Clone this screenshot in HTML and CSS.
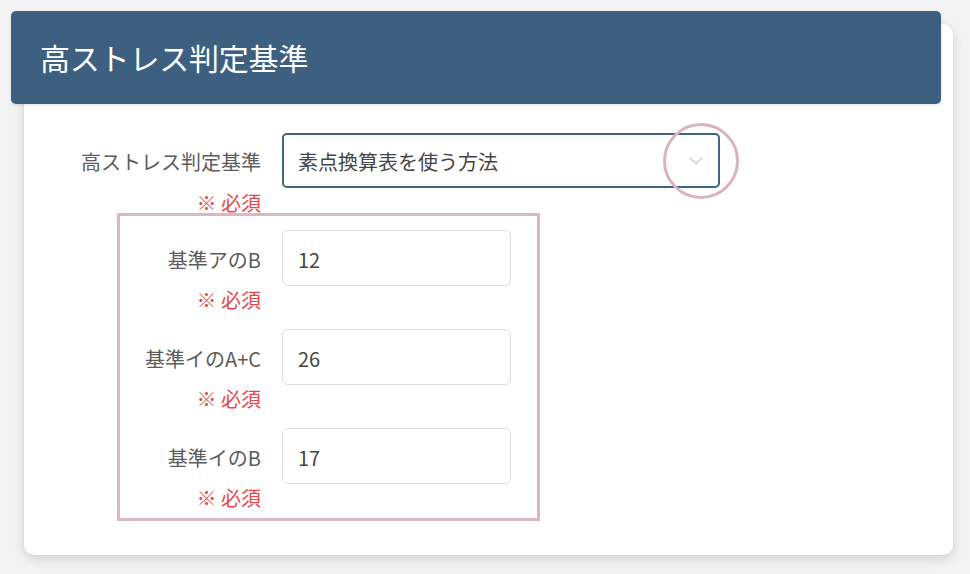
FILE: index.html
```html
<!DOCTYPE html>
<html lang="ja">
<head>
<meta charset="utf-8">
<link rel="stylesheet" href="styles.css">
</head>
<body>
<div class="card">
  <div class="header"><h1 class="title">高ストレス判定基準</h1></div>
  <div class="form">
    <div class="row row-main">
      <div class="label-col">
        <div class="label">高ストレス判定基準</div>
      </div>
      <div class="control">
        <div class="select">
          <span class="select-text">素点換算表を使う方法</span>
          <svg class="chevron" width="14" height="8" viewBox="0 0 14 8"><path d="M1 1 L7 6.5 L13 1" fill="none" stroke="#d2d2d2" stroke-width="1.6" stroke-linecap="round" stroke-linejoin="round"/></svg>
          <div class="ring"></div>
        </div>
      </div>
    </div>
    <div class="req req-main">※ 必須</div>
    <div class="group">
      <div class="item">
        <div class="row row-sub">
          <div class="label sub-label">基準アのB</div>
          <div class="input">12</div>
        </div>
        <div class="req req-sub">※ 必須</div>
      </div>
      <div class="item">
        <div class="row row-sub">
          <div class="label sub-label">基準イのA+C</div>
          <div class="input">26</div>
        </div>
        <div class="req req-sub">※ 必須</div>
      </div>
      <div class="item">
        <div class="row row-sub">
          <div class="label sub-label">基準イのB</div>
          <div class="input">17</div>
        </div>
        <div class="req req-sub">※ 必須</div>
      </div>
    </div>
  </div>
</div>
</body>
</html>
```

FILE: styles.css
```css
* { box-sizing: border-box; }
html, body { margin: 0; padding: 0; }
body {
  background: #f3f3f3;
  font-family: "Noto Sans CJK JP", "Noto Sans", sans-serif;
  width: 970px;
  height: 574px;
  overflow: hidden;
  padding: 24px 0 0 24px;
}
.card {
  display: flow-root;
  width: 929px;
  height: 531px;
  background: #ffffff;
  border-radius: 10px;
  box-shadow: 0 4px 12px rgba(0,0,0,0.14), 0 0 3px rgba(0,0,0,0.05);
}
.header {
  margin: -13px 0 0 -13px;
  width: 930px;
  height: 93px;
  background: #3d5f80;
  border-radius: 5px;
  display: flex;
  align-items: center;
  padding: 0 0 2px 29px;
  box-shadow: 0 1px 3px rgba(0,0,0,0.12);
}
.title {
  margin: 0;
  color: #ffffff;
  font-size: 30px;
  font-weight: 400;
  line-height: 1;
  letter-spacing: -0.2px;
}
.form {
  padding: 29px 0 0 36px;
}
.row {
  display: flex;
  align-items: center;
  gap: 21px;
}
.label-col {
  width: 201px;
  display: flex;
  justify-content: flex-end;
  padding-top: 2px;
}
.label {
  color: #5c5c5c;
  font-size: 20px;
  line-height: 1;
  white-space: nowrap;
  text-align: right;
}
.select {
  position: relative;
  width: 438px;
  height: 55px;
  border: 2px solid #3f6580;
  border-radius: 5px;
  display: flex;
  align-items: center;
  justify-content: space-between;
  padding: 2px 14px 0 14px;
}
.select-text {
  color: #454545;
  font-size: 20px;
  line-height: 1;
}
.chevron { display: block; margin: -2px 1px 0 0; }
.ring {
  position: absolute;
  left: 379px;
  top: -12px;
  width: 76px;
  height: 76px;
  border: 3px solid #d8b4c0;
  border-radius: 50%;
}
.req {
  color: #e64848;
  font-size: 20px;
  line-height: 25px;
  height: 25px;
  text-align: right;
  white-space: nowrap;
}
.req-main {
  width: 201px;
  margin-top: 2px;
}
.group {
  margin: -2px 0 0 57px;
  width: 423px;
  border: 3px solid #dab7c3;
  padding: 14px 0 7px 0;
  display: flex;
  flex-direction: column;
  gap: 16px;
}
.row-sub .sub-label {
  width: 141px;
  padding-top: 3px;
}
.input {
  width: 229px;
  height: 56px;
  border: 1.5px solid #dddddd;
  border-radius: 6px;
  color: #454545;
  font-size: 20px;
  display: flex;
  align-items: center;
  padding: 3px 0 0 15px;
}
.req-sub {
  width: 141px;
  margin-top: 1px;
  height: 26px;
  line-height: 26px;
}
```
